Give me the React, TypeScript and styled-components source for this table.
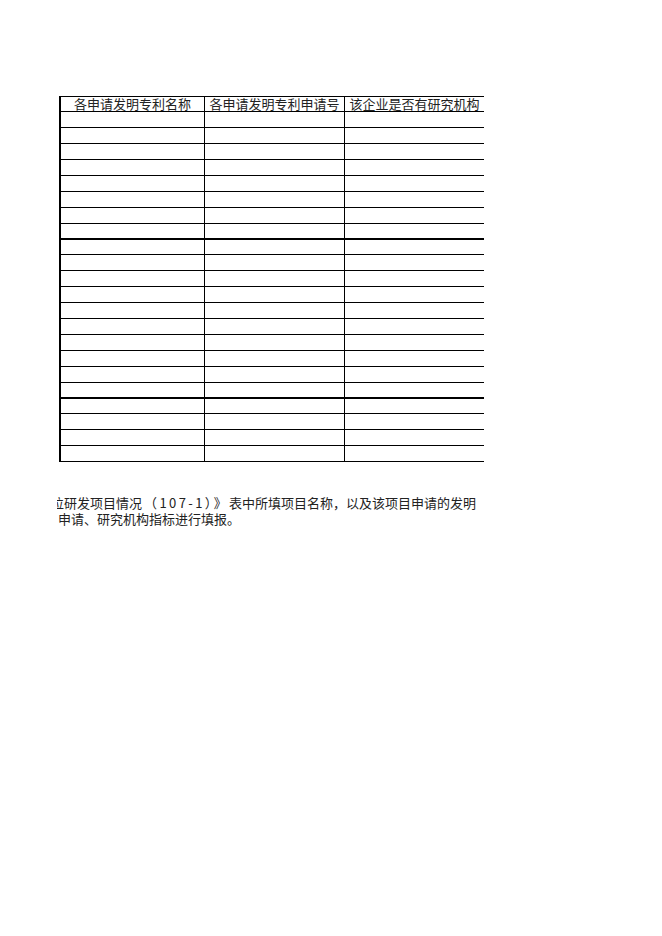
import React from "react";
import styled, { createGlobalStyle } from "styled-components";

const headers = ["各申请发明专利名称", "各申请发明专利申请号", "该企业是否有研究机构"];

// rows after which the sheet draws a heavy rule
const thickAfter = [8, 18];
const rowCount = 22;

const GlobalStyle = createGlobalStyle`
    html, body {
        margin: 0;
        padding: 0;
        background: #ffffff;
    }

    body {
        font-family: "Noto Sans CJK SC", "Liberation Serif", serif;
        color: #1a1a1a;
    }
`;

const App = () => (
    <Page>
        <GlobalStyle />
        <Sheet>
            <HeaderRow>
                {headers.map((h) => (
                    <HeaderCell key={h}>{h}</HeaderCell>
                ))}
            </HeaderRow>
            {Array.from({ length: rowCount }, (_, i) => (
                <Row key={i} $thick={thickAfter.includes(i + 1)}>
                    <Cell />
                    <Cell />
                    <Cell />
                </Row>
            ))}
        </Sheet>
        <Note>
            <NoteLine $shift={-6}>
                位研发项目情况<Code>（107-1）》</Code>表中所填项目名称，以及该项目申请的发明
            </NoteLine>
            <NoteLine $shift={1}>申请、研究机构指标进行填报。</NoteLine>
        </Note>
    </Page>
);

const Page = styled.div`
    width: 662px;
    min-height: 936px;
    box-sizing: border-box;
    padding: 96px 0 0 59px;
    display: flex;
    flex-direction: column;
`;

const Sheet = styled.div`
    width: 425px;
    box-sizing: border-box;
    border-top: 1px solid #000;
    border-left: 2px solid #000;
    display: flex;
    flex-direction: column;
`;

const HeaderRow = styled.div`
    display: grid;
    grid-template-columns: 144px 140px 139px;
    height: 15px;
    box-sizing: border-box;
    border-bottom: 1px solid #000;
`;

const HeaderCell = styled.div`
    font-size: 13px;
    line-height: 14px;
    text-align: center;
    white-space: nowrap;
    color: #222;

    &:not(:last-child) {
        border-right: 1px solid #000;
    }
`;

const Row = styled.div<{ $thick: boolean }>`
    display: grid;
    grid-template-columns: 144px 140px 139px;
    height: 16px;
    box-sizing: border-box;
    border-bottom: ${(p) => (p.$thick ? "2px" : "1px")} solid #000;
    margin-bottom: ${(p) => (p.$thick ? "-1px" : "0")};
`;

const Cell = styled.div`
    &:not(:last-child) {
        border-right: 1px solid #000;
    }
`;

const Note = styled.div`
    margin: 33px 0 0 -2px;
    width: 427px;
    overflow: hidden;
    display: flex;
    flex-direction: column;
`;

const NoteLine = styled.div<{ $shift: number }>`
    font-size: 13px;
    line-height: 16px;
    white-space: nowrap;
    color: #222;
    margin-left: ${(p) => p.$shift}px;
`;

const Code = styled.span`
    letter-spacing: 2.4px;
    margin-left: 2px;
`;

export default App;
